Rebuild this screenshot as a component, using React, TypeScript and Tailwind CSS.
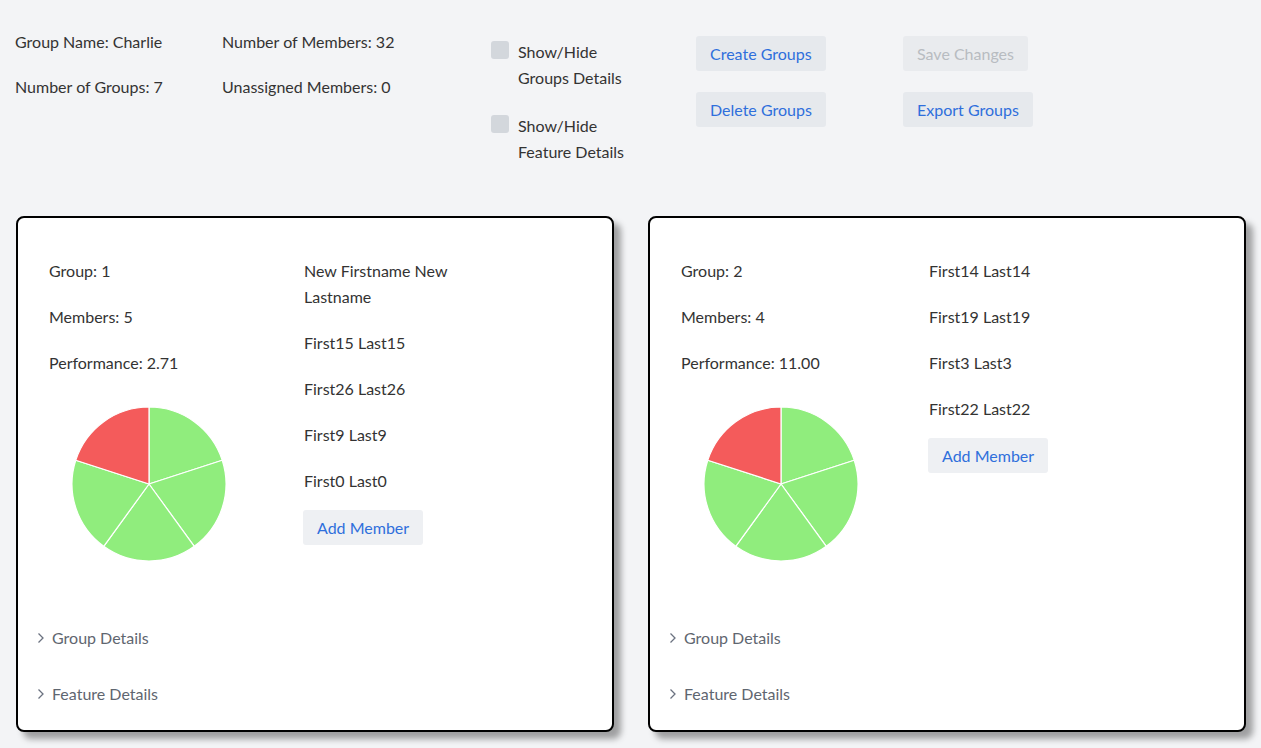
import React from 'react';

type Group = {
  id: number;
  members: string[];
  performance: string;
  leftCol: string;
};

const groups: Group[] = [
  {
    id: 1,
    members: ['New Firstname New Lastname', 'First15 Last15', 'First26 Last26', 'First9 Last9', 'First0 Last0'],
    performance: '2.71',
    leftCol: 'w-[255px]',
  },
  {
    id: 2,
    members: ['First14 Last14', 'First19 Last19', 'First3 Last3', 'First22 Last22'],
    performance: '11.00',
    leftCol: 'w-[248px]',
  },
];

// pie: 5 equal slices, last one red (Highcharts palette)
const slices = [
  { d: 'M78 78 L78 1 A77 77 0 0 1 151.23 54.21 Z', fill: '#90ed7d' },
  { d: 'M78 78 L151.23 54.21 A77 77 0 0 1 123.26 140.29 Z', fill: '#90ed7d' },
  { d: 'M78 78 L123.26 140.29 A77 77 0 0 1 32.74 140.29 Z', fill: '#90ed7d' },
  { d: 'M78 78 L32.74 140.29 A77 77 0 0 1 4.77 54.21 Z', fill: '#90ed7d' },
  { d: 'M78 78 L4.77 54.21 A77 77 0 0 1 78 1 Z', fill: '#f45b5b' },
];

function Pie() {
  return (
    <svg width="156" height="156" viewBox="0 0 156 156" className="ml-[22px]">
      {slices.map((s, i) => (
        <path key={i} d={s.d} fill={s.fill} stroke="#ffffff" strokeWidth="1.2" strokeLinejoin="round" />
      ))}
    </svg>
  );
}

function Chevron() {
  return (
    <svg width="8" height="12" viewBox="0 0 8 12" className="mr-[7px]">
      <polyline points="1.5,1.5 6,6 1.5,10.5" fill="none" stroke="#6b7280" strokeWidth="1.3" />
    </svg>
  );
}

function GroupCard({ g }: { g: Group }) {
  return (
    <div className="w-[598px] h-[516px] bg-white border-2 border-black rounded-[8px] shadow-[7px_7px_6px_rgba(0,0,0,0.35)] flex flex-col">
      <div className="flex pt-[40px] pl-[31px]">
        <div className={`${g.leftCol} flex flex-col gap-[20px]`}>
          <div>Group: {g.id}</div>
          <div>Members: {g.members.length}</div>
          <div>Performance: {g.performance}</div>
          <div className="mt-[10px]">
            <Pie />
          </div>
        </div>
        <div className="w-[175px] flex flex-col gap-[20px]">
          {g.members.map((m) => (
            <div key={m}>{m}</div>
          ))}
          <button className="-mt-[4px] w-fit h-[35px] px-[14px] bg-[#eef0f3] rounded-[3px] text-[#2f6fdc] -ml-[1px]">
            Add Member
          </button>
        </div>
      </div>
      <div className="mt-auto pb-[23px] pl-[19px] flex flex-col gap-[30px] text-[#5f6670]">
        <div className="flex items-center">
          <Chevron />
          Group Details
        </div>
        <div className="flex items-center">
          <Chevron />
          Feature Details
        </div>
      </div>
    </div>
  );
}

function Check({ top, bottom }: { top: string; bottom: string }) {
  return (
    <div className="flex">
      <div className="w-[18px] h-[18px] mt-[2px] rounded-[3px] bg-[#d3d7dc] mr-[9px]" />
      <div>
        <div>{top}</div>
        <div>{bottom}</div>
      </div>
    </div>
  );
}

export default function App() {
  return (
    <div className="min-h-screen bg-[#f3f4f6] text-[#333333] text-[16px] leading-[26px] font-['Lato','Liberation_Sans',sans-serif] overflow-hidden">
      <div className="flex pl-[15px] h-[216px]">
        <div className="w-[207px] pt-[29px] flex flex-col gap-[19px]">
          <div>Group Name: Charlie</div>
          <div>Number of Groups: 7</div>
        </div>
        <div className="w-[269px] pt-[29px] flex flex-col gap-[19px]">
          <div>Number of Members: 32</div>
          <div>Unassigned Members: 0</div>
        </div>
        <div className="w-[205px] pt-[39px] flex flex-col gap-[22px]">
          <Check top="Show/Hide" bottom="Groups Details" />
          <Check top="Show/Hide" bottom="Feature Details" />
        </div>
        <div className="w-[207px] pt-[36px] flex flex-col gap-[21px] items-start">
          <button className="h-[35px] px-[14px] bg-[#e6e9ed] rounded-[3px] text-[#2f6fdc]">Create Groups</button>
          <button className="h-[35px] px-[14px] bg-[#e6e9ed] rounded-[3px] text-[#2f6fdc]">Delete Groups</button>
        </div>
        <div className="pt-[36px] flex flex-col gap-[21px] items-start">
          <button disabled className="h-[35px] px-[14px] bg-[#e9ebee] rounded-[3px] text-[#b8bcc1]">Save Changes</button>
          <button className="h-[35px] px-[14px] bg-[#e6e9ed] rounded-[3px] text-[#2f6fdc]">Export Groups</button>
        </div>
      </div>
      <div className="flex gap-[34px] pl-[16px]">
        {groups.map((g) => (
          <GroupCard key={g.id} g={g} />
        ))}
      </div>
    </div>
  );
}
